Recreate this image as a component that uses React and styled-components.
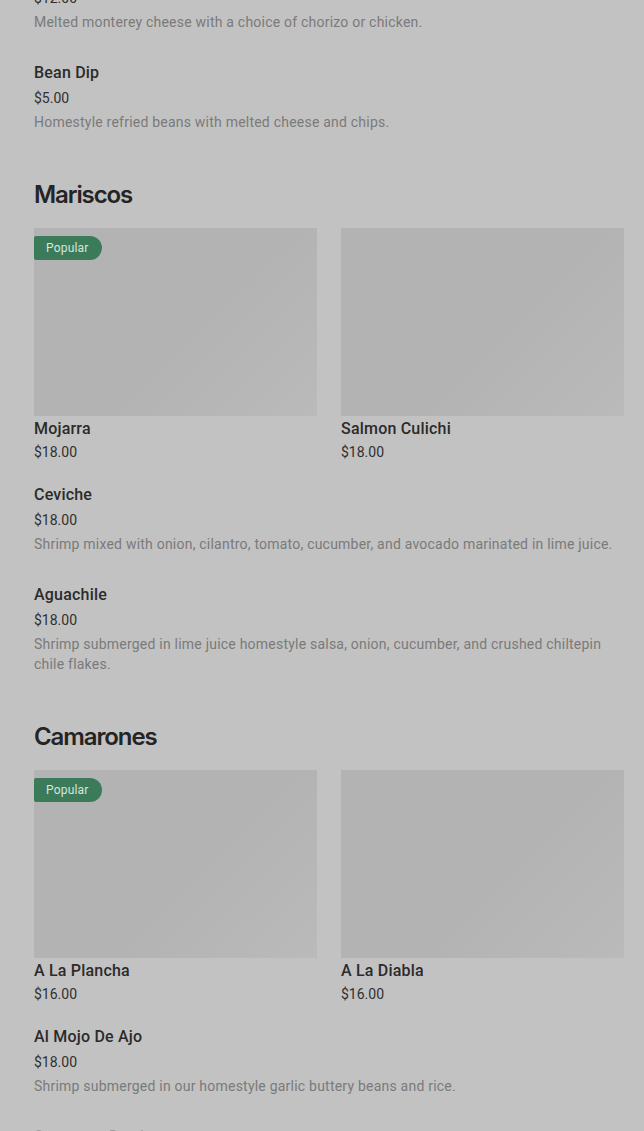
import React from 'react';
import styled, { createGlobalStyle } from 'styled-components';

const GlobalStyle = createGlobalStyle`
  html, body {
    margin: 0;
    padding: 0;
    background: #c2c2c2;
    overflow: hidden;
  }
  body {
    font-family: Roboto, "Liberation Sans", sans-serif;
  }
`;

const Page = styled.div`
  width: 644px;
  height: 1131px;
  overflow: hidden;
  background: #c2c2c2;
`;

const Content = styled.div`
  margin-top: -38px;
  padding: 0 20px 0 34px;
  display: flex;
  flex-direction: column;
`;

const Section = styled.section`
  display: flex;
  flex-direction: column;
  padding-bottom: 47px;
`;

const Heading = styled.h2`
  margin: 0 0 17px;
  font-family: Inter, "Noto Sans", sans-serif;
  font-size: 24px;
  line-height: 32px;
  font-weight: 600;
  letter-spacing: -1.1px;
  color: #242424;
`;

const List = styled.div`
  display: flex;
  flex-direction: column;
  gap: 30px;
`;

const Grid = styled.div`
  display: grid;
  grid-template-columns: 283px 283px;
  column-gap: 24px;
  margin-bottom: 22px;
`;

const Card = styled.div`
  display: flex;
  flex-direction: column;
`;

const Thumb = styled.div`
  position: relative;
  height: 188px;
  background: linear-gradient(135deg, #b3b3b3 0%, #b3b3b3 55%, #bababa 100%);
  margin-bottom: 2px;
`;

const Badge = styled.span`
  position: absolute;
  top: 8px;
  left: 0;
  height: 24px;
  padding: 0 13px 0 12px;
  display: flex;
  align-items: center;
  background: #3c7b5a;
  color: #d4e6da;
  font-size: 12px;
  letter-spacing: 0.2px;
  border-radius: 2px 12px 12px 2px;
`;

const Item = styled.div`
  display: flex;
  flex-direction: column;
`;

const Name = styled.div`
  font-size: 16px;
  line-height: 22px;
  font-weight: 500;
  letter-spacing: 0.2px;
  color: #2b2b2b;
`;

const Price = styled.div`
  margin-top: ${p => (p.$tight ? '2px' : '4px')};
  font-size: 14px;
  line-height: 20px;
  color: #303030;
`;

const Desc = styled.p`
  margin: 4px 0 0;
  font-size: 14px;
  line-height: 20px;
  letter-spacing: 0.22px;
  color: #7a7a7a;
  max-width: 590px;
`;

const Faint = styled.div`
  font-size: 14px;
  line-height: 20px;
  color: #9a9a9a;
`;

const MenuItem = ({ name, price, desc }) => (
  <Item>
    <Name>{name}</Name>
    <Price>{price}</Price>
    {desc && <Desc>{desc}</Desc>}
  </Item>
);

const FeaturedCard = ({ name, price, popular }) => (
  <Card>
    <Thumb>{popular && <Badge>Popular</Badge>}</Thumb>
    <Name>{name}</Name>
    <Price $tight>{price}</Price>
  </Card>
);

export default function App() {
  return (
    <Page>
      <GlobalStyle />
      <Content>
        <Section>
          <List>
            <MenuItem
              name="Queso Fundido"
              price="$12.00"
              desc="Melted monterey cheese with a choice of chorizo or chicken."
            />
            <MenuItem
              name="Bean Dip"
              price="$5.00"
              desc="Homestyle refried beans with melted cheese and chips."
            />
          </List>
        </Section>

        <Section>
          <Heading>Mariscos</Heading>
          <Grid>
            <FeaturedCard name="Mojarra" price="$18.00" popular />
            <FeaturedCard name="Salmon Culichi" price="$18.00" />
          </Grid>
          <List>
            <MenuItem
              name="Ceviche"
              price="$18.00"
              desc="Shrimp mixed with onion, cilantro, tomato, cucumber, and avocado marinated in lime juice."
            />
            <MenuItem
              name="Aguachile"
              price="$18.00"
              desc="Shrimp submerged in lime juice homestyle salsa, onion, cucumber, and crushed chiltepin chile flakes."
            />
          </List>
        </Section>

        <Section>
          <Heading>Camarones</Heading>
          <Grid>
            <FeaturedCard name="A La Plancha" price="$16.00" popular />
            <FeaturedCard name="A La Diabla" price="$16.00" />
          </Grid>
          <List>
            <MenuItem
              name="Al Mojo De Ajo"
              price="$18.00"
              desc="Shrimp submerged in our homestyle garlic buttery beans and rice."
            />
            <Item>
              <Faint>Camarones Rancheros</Faint>
            </Item>
          </List>
        </Section>
      </Content>
    </Page>
  );
}
